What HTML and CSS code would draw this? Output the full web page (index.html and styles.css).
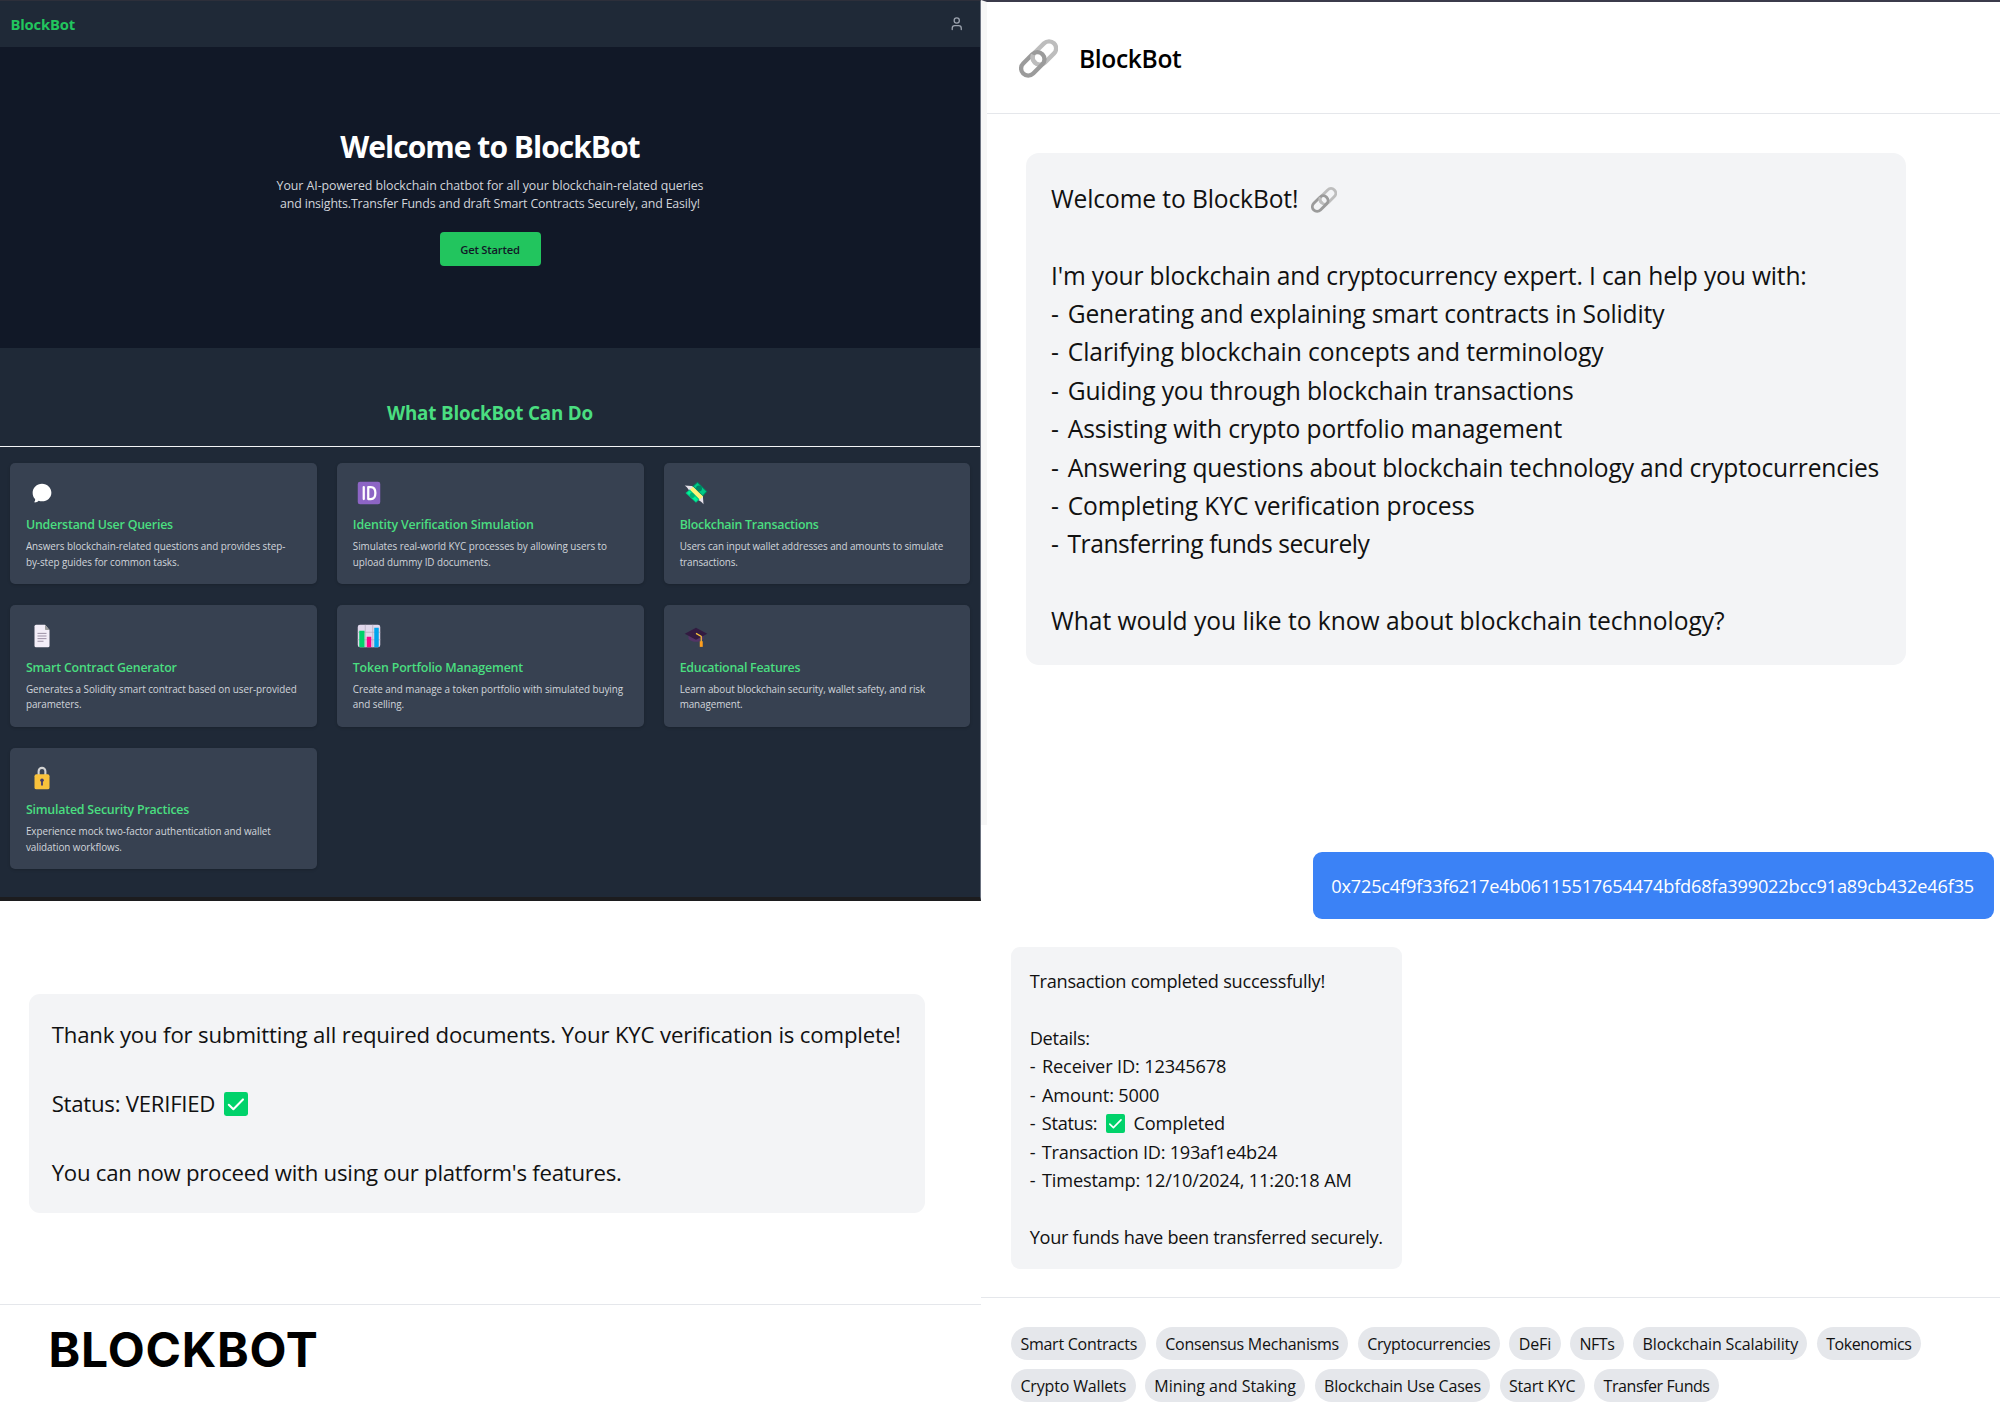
FILE: index.html
```html
<!DOCTYPE html>
<html lang="en">
<head>
<meta charset="utf-8">
<title>BlockBot</title>
<link rel="stylesheet" href="styles.css">
</head>
<body>
<svg width="0" height="0" class="defs" aria-hidden="true">
  <symbol id="link" viewBox="0 0 38 38">
    <g fill="none" stroke-width="4.2">
      <rect x="11.500" y="6.700" width="26.500" height="13.800" rx="6.900" transform="rotate(-45 24.8 13.6)" stroke="#bdbdbd"/>
      <rect x="0.200" y="17.400" width="26.500" height="13.800" rx="6.900" transform="rotate(-45 13.4 24.3)" stroke="#9b9b9b"/>
      <path d="M13.600 15.200c-1.500 3.500 0 6.500 2.800 8" stroke="#bdbdbd"/>
    </g>
  </symbol>
  <symbol id="check" viewBox="0 0 20 20">
    <rect width="20" height="20" rx="2" fill="#00d26a"/>
    <path d="M4 10.600l3.800 3.800 8-8.200" fill="none" stroke="#fff" stroke-width="1.700" stroke-linecap="round" stroke-linejoin="round"/>
  </symbol>
</svg>
<main class="board">
  <div class="column">
    <section class="landing">
      <header class="topbar">
        <span class="brand">BlockBot</span>
        <svg class="user" viewBox="0 0 24 24"><path d="M19 21v-2a4 4 0 0 0-4-4H9a4 4 0 0 0-4 4v2"/><circle cx="12" cy="7" r="4"/></svg>
      </header>
      <div class="hero">
        <h1>Welcome to BlockBot</h1>
        <p>Your AI-powered blockchain chatbot for all your blockchain-related queries<br><span class="snug-2">and insights.Transfer Funds and draft Smart Contracts Securely, and Easily!</span></p>
        <button class="cta">Get Started</button>
      </div>
      <h2>What BlockBot Can Do</h2>
      <div class="cards">
        <article class="card">
          <svg class="emoji" viewBox="0 0 32 32"><path d="M16 3.500C23 3.500 28.500 9 28.500 15.500S23 27 16 27c-1.600 0-3-.3-4.500-.8-1.300 1.300-3 2.300-5 2.300-.8 0-.9-.6-.4-1.200.8-1 .9-2.300.6-3.300C4.500 21.800 3.500 19 3.500 15.500 3.500 9 9 3.500 16 3.500z" fill="#fff"/></svg>
          <h3>Understand User Queries</h3>
          <p>Answers blockchain-related questions and provides step-<br>by-step guides for common tasks.</p>
        </article>
        <article class="card">
          <svg class="emoji" viewBox="0 0 32 32"><rect x="1" y="1" width="30" height="30" rx="3" fill="#8d65c5"/><path d="M9 8v16M15 8v16h3.500c4 0 6-3.500 6-8s-2-8-6-8z" fill="none" stroke="#fff" stroke-width="3" stroke-linecap="round" stroke-linejoin="round"/></svg>
          <h3 class="snug-2">Identity Verification Simulation</h3>
          <p>Simulates real-world KYC processes by allowing users to<br>upload dummy ID documents.</p>
        </article>
        <article class="card">
          <svg class="emoji" viewBox="0 0 32 32"><path d="M1 6l13 1 3 6-9 5C8 13 5 9 1 6zM26 31l-1-13-6-1-1 8c3 1 6 3 8 6z" fill="#e6e2ea"/><path d="M18 1l13 13-6 7L11 7z" fill="#008463"/><path d="M18 2.500l11.500 11.500-4.500 5L13 7z" fill="#00c985"/><circle cx="20" cy="10" r="4" fill="#008463"/><path d="M8 11l13 13-5 5L2 16z" fill="#00c985"/><path d="M7 13l11.500 11.500-2.800 2.800L4 16z" fill="#00f397"/><circle cx="11" cy="19" r="3.500" fill="#00b274"/><path d="M12 7.500l13.500 13-4.500 4L8 11.500z" fill="#fff478"/></svg>
          <h3 class="snug-3">Blockchain Transactions</h3>
          <p class="snug-1">Users can input wallet addresses and amounts to simulate<br>transactions.</p>
        </article>
        <article class="card">
          <svg class="emoji" viewBox="0 0 32 32"><path d="M8 1h12l6 7v21a2 2 0 0 1-2 2H8a2 2 0 0 1-2-2V3a2 2 0 0 1 2-2z" fill="#f3eef8"/><path d="M20 1l6 7h-5a1 1 0 0 1-1-1z" fill="#9b9b9b"/><path d="M10 12.500h12M10 16h12M10 19.500h12M10 23h8" stroke="#998ea4" stroke-width="1.300"/></svg>
          <h3>Smart Contract Generator</h3>
          <p>Generates a Solidity smart contract based on user-provided<br>parameters.</p>
        </article>
        <article class="card">
          <svg class="emoji" viewBox="0 0 32 32"><rect x="1" y="1" width="30" height="30" rx="3" fill="#e1d8ec"/><path d="M11 1v30M21 1v30M1 11h30M1 21h30" stroke="#b4acbc" stroke-width="1"/><path d="M3 9h7v22H4a1 1 0 0 1-1-1z" fill="#00d26a"/><path d="M13 17h6v14h-6z" fill="#fc0486"/><path d="M23 5h6v25a1 1 0 0 1-1 1h-5z" fill="#00a6ed"/></svg>
          <h3 class="snug-2">Token Portfolio Management</h3>
          <p>Create and manage a token portfolio with simulated buying<br>and selling.</p>
        </article>
        <article class="card">
          <svg class="emoji" viewBox="0 0 32 32"><path d="M6 14v6c5 5 15 5 20 0v-6z" fill="#533566"/><path d="M16 5L31 13 16 21 1 13z" fill="#321b41"/><path d="M16 12.500l7 4V24" fill="none" stroke="#f9c23c" stroke-width="1.600"/><path d="M21 23h4v7.500h-4z" fill="#ff9f1e"/></svg>
          <h3 class="snug-3">Educational Features</h3>
          <p class="snug-1">Learn about blockchain security, wallet safety, and risk<br>management.</p>
        </article>
        <article class="card">
          <svg class="emoji" viewBox="0 0 32 32"><path d="M11.500 12V7a4.500 4.500 0 0 1 9 0v5" fill="none" stroke="#d3d3d3" stroke-width="2.800"/><rect x="6" y="11" width="20" height="20" rx="2.500" fill="#f9c23c"/><circle cx="16" cy="19" r="2.400" fill="#433b6b"/><path d="M16 19v7" stroke="#433b6b" stroke-width="2.400"/></svg>
          <h3>Simulated Security Practices</h3>
          <p>Experience mock two-factor authentication and wallet<br>validation workflows.</p>
        </article>
      </div>
    </section>
    <section class="kyc">
      <div class="bubble bubble-kyc"><span class="snug-2">Thank you for submitting all required documents. Your KYC verification is complete!</span><br><br><span class="snug-3">Status: VERIFIED</span> <svg class="inline-check"><use href="#check"/></svg><br><br><span class="snug-3">You can now proceed with using our platform's features.</span></div>
    </section>
    <footer class="wordmark">BLOCKBOT</footer>
  </div>
  <div class="column">
    <section class="welcome">
      <header class="chat-head">
        <svg class="chat-logo"><use href="#link"/></svg>
        <span class="chat-title">BlockBot</span>
      </header>
      <div class="bubble bubble-welcome">Welcome to BlockBot! <svg class="inline-link"><use href="#link"/></svg><br><br><span class="snug-2">I'm your blockchain and cryptocurrency expert. I can help you with:</span><br><i>-</i><span class="snug-2"> Generating and explaining smart contracts in Solidity</span><br><i>-</i><span class="snug-1"> Clarifying blockchain concepts and terminology</span><br><i>-</i><span class="snug-2"> Guiding you through blockchain transactions</span><br><i>-</i> Assisting with crypto portfolio management<br><i>-</i><span class="snug-2"> Answering questions about blockchain technology and cryptocurrencies</span><br><i>-</i> Completing KYC verification process<br><i>-</i><span class="snug-5"> Transferring funds securely</span><br><br><span class="snug-0">What would you like to know about blockchain technology?</span></div>
    </section>
    <section class="transfer">
      <div class="bubble bubble-user">0x725c4f9f33f6217e4b06115517654474bfd68fa399022bcc91a89cb432e46f35</div>
      <div class="bubble bubble-result"><span class="snug-3">Transaction completed successfully!</span><br><br><span class="snug-4">Details:</span><br><i>-</i> Receiver ID: 12345678<br><i>-</i> Amount: 5000<br><i>-</i><span class="snug-4"> Status:</span> <svg class="inline-check small"><use href="#check"/></svg> Completed<br><i>-</i><span class="snug-3"> Transaction ID: 193af1e4b24</span><br><i>-</i> Timestamp: 12/10/2024, 11:20:18 AM<br><br><span class="snug-4">Your funds have been transferred securely.</span></div>
    </section>
    <nav class="topics">
      <div class="topic-row"><span class="chip snug-3">Smart Contracts</span><span class="chip snug-3">Consensus Mechanisms</span><span class="chip snug-3">Cryptocurrencies</span><span class="chip snug-1">DeFi</span><span class="chip snug-5">NFTs</span><span class="chip">Blockchain Scalability</span><span class="chip snug-5">Tokenomics</span></div>
      <div class="topic-row"><span class="chip snug-2">Crypto Wallets</span><span class="chip snug-0">Mining and Staking</span><span class="chip snug-2">Blockchain Use Cases</span><span class="chip snug-3">Start KYC</span><span class="chip snug-5">Transfer Funds</span></div>
    </nav>
  </div>
</main>
</body>
</html>
```
FILE: styles.css
```css
* { box-sizing: border-box; }
body { margin: 0; background: #fff; font-family: "Open Sans", "Noto Sans", sans-serif; color: #111; }
h1, h2, h3, p { margin: 0; }
i { font-style: normal; }
.defs { position: absolute; }
.board { display: grid; grid-template-columns: 981px 1019px; height: 1414px; overflow: hidden; }
.column { display: flex; flex-direction: column; min-width: 0; }

.landing { height: 901px; background: #1f2937; border-top: 1px solid #2d2f3a; border-bottom: 4px solid #1c1c1e; border-right: 1px solid #6b7280; }
.topbar { height: 46px; display: flex; align-items: center; justify-content: space-between; padding: 0 16px 0 10.500px; }
.brand { font-size: 14.800px; font-weight: 700; letter-spacing: -.17px; color: #22c55e; }
.user { width: 15.500px; height: 15.500px; fill: none; stroke: #9ca3af; stroke-width: 2; stroke-linecap: round; stroke-linejoin: round; }
.hero { height: 301px; background: #111827; display: flex; flex-direction: column; align-items: center; padding-top: 80px; text-align: center; color: #fff; }
.hero h1 { font-size: 30px; line-height: 40px; font-weight: 700; letter-spacing: -.98px; }
.hero p { margin-top: 10px; font-size: 12.400px; line-height: 18px; letter-spacing: -.06px; color: #d1d5db; }
.cta { margin-top: 19px; width: 101px; height: 34px; border: 0; border-radius: 4px; background: #22c55e; color: #111827; font: 600 11.200px "Open Sans", sans-serif; letter-spacing: -.19px; padding: 0; }
.landing h2 { height: 99px; padding-top: 50px; border-bottom: 1px solid #f3f4f6; text-align: center; font-size: 18.800px; line-height: 30px; font-weight: 700; letter-spacing: -.17px; color: #4ade80; }
.cards { display: grid; grid-template-columns: repeat(3, 306.300px); gap: 21px 20.600px; padding: 15.500px 0 0 10.400px; }
.card { height: 121.500px; padding: 18.500px 0 0 15.500px; border-radius: 5px; background: #374151; box-shadow: 0 1px 3px rgba(0,0,0,.18); }
.emoji { display: block; width: 24px; height: 24px; margin-left: 4px; }
.card h3 { margin-top: 11px; font-size: 12.400px; line-height: 18px; font-weight: 600; letter-spacing: -.21px; color: #4ade80; }
.card p { margin-top: 5px; font-size: 9.900px; line-height: 15.600px; letter-spacing: -.05px; color: #d1d5db; }

.bubble { background: #f3f4f6; white-space: nowrap; align-self: flex-start; }
.kyc { height: 404px; padding: 92.500px 0 0 28.700px; border-bottom: 1px solid #e5e7eb; display: flex; }
.bubble-kyc { width: 896.300px; height: 219.200px; padding: 24.400px 0 0 23px; border-radius: 11px; font-size: 22.200px; line-height: 34.600px; }
.inline-check { width: 24px; height: 24px; vertical-align: -4px; margin-left: 3px; }
.inline-check.small { width: 19px; height: 19px; vertical-align: -2.500px; margin: 0 4px; }
.wordmark { padding: 16px 0 0 48.500px; font: 700 48px/58px Inter, sans-serif; letter-spacing: .8px; color: #000; }

.welcome { height: 825px; border-top: 2px solid #3b3b4b; border-left: 6px solid #f7f7f7; display: flex; flex-direction: column; }
.chat-head { height: 112px; border-bottom: 1px solid #e5e7eb; display: flex; align-items: center; gap: 21px; padding: 2px 0 0 32px; }
.chat-logo { width: 39px; height: 39px; }
.chat-title { font-size: 24.600px; font-weight: 600; letter-spacing: -.36px; color: #000; }
.bubble-welcome { margin: 38.500px 0 0 39px; width: 879.600px; height: 512px; padding: 27.300px 0 0 25px; border-radius: 13px; font-size: 24.600px; line-height: 38.400px; letter-spacing: -.12px; }
.bubble-welcome i { margin-right: 2.700px; }
.inline-link { width: 26px; height: 26px; vertical-align: -5px; margin-left: 6px; }
.transfer { height: 473px; padding: 27.400px 6px 0 30px; display: flex; flex-direction: column; gap: 28.400px; border-bottom: 1px solid #e5e7eb; }
.bubble-user { align-self: flex-end; width: 681.500px; height: 66.400px; padding: 20px 0 0 18.700px; border-radius: 9px; background: #3b82f6; color: #fff; font-size: 18.200px; line-height: 28.400px; letter-spacing: -.195px; }
.bubble-result { width: 390.500px; height: 322px; padding: 19.900px 0 0 18.700px; border-radius: 9px; font-size: 18.200px; line-height: 28.400px; letter-spacing: -.15px; }
.bubble-result i { margin-right: 2px; }
.topics { padding: 28.700px 0 0 30px; display: flex; flex-direction: column; gap: 9.400px; }
.topic-row { display: flex; gap: 9.400px; }
.chip { height: 33px; padding: 1px 9.400px 0; border-radius: 17px; background: #e5e7eb; font-size: 16px; line-height: 33px; letter-spacing: -.13px; white-space: nowrap; }

/* tracking steps */
.board .snug-0 { letter-spacing: -.02px; }
.board .snug-1 { letter-spacing: -.09px; }
.board .snug-2 { letter-spacing: -.16px; }
.board .snug-3 { letter-spacing: -.255px; }
.board .snug-4 { letter-spacing: -.31px; }
.board .snug-5 { letter-spacing: -.43px; }
```
